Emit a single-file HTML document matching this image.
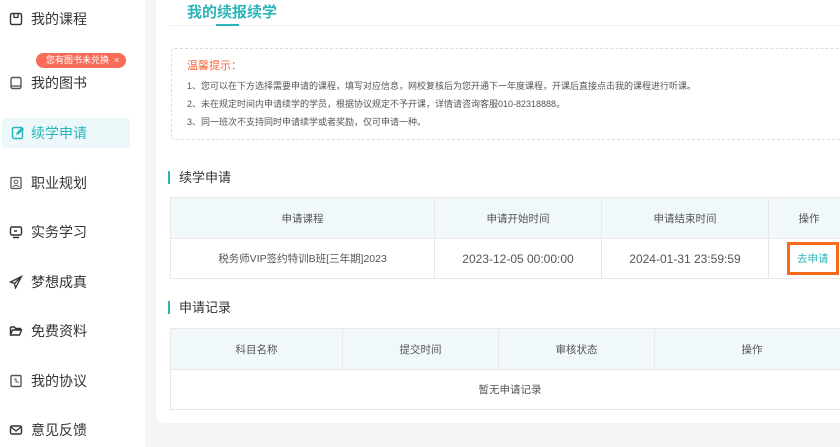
<!DOCTYPE html><html><head><meta charset="utf-8"><style>
*{margin:0;padding:0;box-sizing:border-box}
body{width:840px;height:447px;overflow:hidden;background:#f5f5f5;font-family:"Liberation Sans","Noto Sans CJK SC",sans-serif;position:relative;color:#333}
.side{position:absolute;left:0;top:0;width:145px;height:447px;background:#fff}
.item{position:absolute;left:0;width:145px;height:30px;line-height:30px;font-size:14px;color:#333;padding-left:31px}
.item svg{position:absolute;left:9px;top:8px}
.active{left:2px;width:128px;background:#edf8fa;border-radius:4px;color:#2bb5b9;padding-left:29px}
.badge{position:absolute;left:36px;top:53px;width:90px;height:15px;background:#f76d5a;border-radius:8px;color:#fff;font-size:9px;line-height:15px;padding-left:10px}
.main{position:absolute;left:156px;top:0;width:700px;height:423px;background:#fff;border-radius:0 0 0 8px}
.abs{position:absolute}
.tip{left:171px;top:48px;width:680px;height:92px;border:1px dashed #ddd;border-radius:4px}
.t{font-size:9px;color:#555;position:absolute;left:187px}
.sec{position:absolute;left:168px;font-size:13px;color:#333;padding-left:9px;border-left:2px solid #2bb5b9;line-height:13px}
table{position:absolute;left:170px;border-collapse:collapse;font-size:10.5px;color:#555}
td{border:1px solid #e8e8e8;text-align:center}
tr.h td{background:#f1f8fb}
</style></head><body>
<div class="side">
<div class="item" style="top:4px"><svg width="14" height="14" viewBox="0 0 14 14"><rect x="1.5" y="1.5" width="11" height="11" rx="1.5" fill="none" stroke="#333" stroke-width="1.4"/><path d="M5 1.5v4h4v-4" fill="none" stroke="#333" stroke-width="1.3"/></svg>我的课程</div>
<div class="badge">您有图书未兑换 &nbsp;×</div>
<div class="item" style="top:68px"><svg width="14" height="14" viewBox="0 0 14 14"><rect x="2" y="1.5" width="10" height="11" rx="1.5" fill="none" stroke="#555" stroke-width="1.4"/><path d="M2 10h10" stroke="#555" stroke-width="1.3"/></svg>我的图书</div>
<div class="item active" style="top:118px"><svg width="14" height="14" viewBox="0 0 14 14"><rect x="1.5" y="1.5" width="10" height="11" rx="1.5" fill="none" stroke="#2bb5b9" stroke-width="1.4"/><path d="M5 9l1-3 5-5 2 2-5 5z" fill="#2bb5b9"/></svg>续学申请</div>
<div class="item" style="top:168px"><svg width="14" height="14" viewBox="0 0 14 14"><rect x="2" y="1.5" width="10" height="11" rx="1" fill="none" stroke="#555" stroke-width="1.3"/><circle cx="7" cy="6" r="1.8" fill="none" stroke="#555"/><path d="M4 11c1-2 5-2 6 0" fill="none" stroke="#555"/></svg>职业规划</div>
<div class="item" style="top:217px"><svg width="14" height="14" viewBox="0 0 14 14"><rect x="1.5" y="2" width="11" height="8" rx="1.5" fill="none" stroke="#333" stroke-width="1.4"/><path d="M4 12.5h6M5 6h3" stroke="#333" stroke-width="1.4"/></svg>实务学习</div>
<div class="item" style="top:267px"><svg width="14" height="14" viewBox="0 0 14 14"><path d="M12.5 1.5L1.5 7l4 1.5 1 4.5zM5.5 8.5l7-7" fill="none" stroke="#333" stroke-width="1.3"/></svg>梦想成真</div>
<div class="item" style="top:316px"><svg width="14" height="14" viewBox="0 0 14 14"><path d="M1.5 3h4l1 1.5h5v2M1.5 3v8h9l2-5h-9l-2 5" fill="none" stroke="#333" stroke-width="1.4"/></svg>免费资料</div>
<div class="item" style="top:366px"><svg width="14" height="14" viewBox="0 0 14 14"><rect x="2" y="1.5" width="10" height="11" rx="1" fill="none" stroke="#555" stroke-width="1.4"/><path d="M5 5h2v3h3" fill="none" stroke="#555"/></svg>我的协议</div>
<div class="item" style="top:415px"><svg width="14" height="14" viewBox="0 0 14 14"><rect x="1.5" y="3" width="11" height="8" rx="1.5" fill="none" stroke="#333" stroke-width="1.4"/><path d="M2 4l5 4 5-4" fill="none" stroke="#333" stroke-width="1.3"/></svg>意见反馈</div>
</div>
<div class="main"></div>
<div class="abs" style="left:187px;top:1px;font-size:15px;font-weight:bold;color:#2bb5b9">我的续报续学</div>
<div class="abs" style="left:170px;top:25px;width:670px;height:1px;background:#eee"></div>
<div class="abs" style="left:216px;top:24px;width:23px;height:2px;background:#2bb5b9"></div>
<div class="abs tip"></div>
<div class="abs" style="left:187px;top:57px;font-size:11px;color:#f66a3c">温馨提示：</div>
<div class="t" style="top:79px">1、您可以在下方选择需要申请的课程，填写对应信息，网校复核后为您开通下一年度课程，开课后直接点击我的课程进行听课。</div>
<div class="t" style="top:97px">2、未在规定时间内申请续学的学员，根据协议规定不予开课，详情请咨询客服010-82318888。</div>
<div class="t" style="top:115px">3、同一班次不支持同时申请续学或者奖励，仅可申请一种。</div>
<div class="sec" style="top:171px">续学申请</div>
<table style="top:197px;width:680px">
<tr class="h" style="height:41px"><td style="width:264px">申请课程</td><td style="width:167px">申请开始时间</td><td style="width:167px">申请结束时间</td><td>操作</td></tr>
<tr style="height:40px"><td>税务师VIP签约特训B班[三年期]2023</td><td style="font-size:12px">2023-12-05 00:00:00</td><td style="font-size:12px">2024-01-31 23:59:59</td><td style="text-align:left;padding-left:18px"><span style="display:inline-block;border:3px solid #f76b1c;color:#2bb5b9;padding:6px 7px;font-size:10.5px">去申请</span></td></tr>
</table>
<div class="sec" style="top:301px">申请记录</div>
<table style="top:328px;width:680px">
<tr class="h" style="height:41px"><td style="width:172px">科目名称</td><td style="width:156px">提交时间</td><td style="width:156px">审核状态</td><td>操作</td></tr>
<tr style="height:40px"><td colspan="4">暂无申请记录</td></tr>
</table>
</body></html>
